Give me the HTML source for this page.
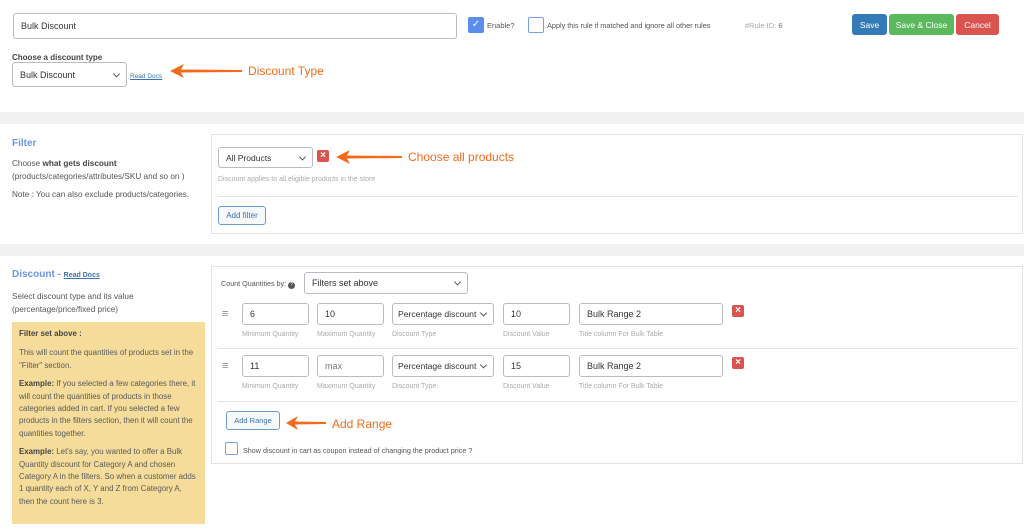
<!DOCTYPE html>
<html><head><meta charset="utf-8"><style>
*{box-sizing:border-box;margin:0;padding:0}
body{width:1024px;height:529px;background:#fff;font-family:"Liberation Sans",sans-serif;color:#555;position:relative;overflow:hidden;font-size:8px}
.a{position:absolute}
.inp{position:absolute;border:1px solid #b8bcc2;border-radius:3px;background:#fff;font-size:9px;color:#333;padding-left:7px;display:flex;align-items:center;white-space:nowrap;overflow:hidden}
.sel::after{content:"";position:absolute;right:7px;top:50%;width:4px;height:4px;border-right:1.2px solid #555;border-bottom:1.2px solid #555;transform:translateY(-70%) rotate(45deg)}
.lbl{position:absolute;font-size:7px;color:#aaa}
.x{position:absolute;width:12px;height:12px;background:#d9534f;border-radius:2px;color:#fff;font-size:10px;font-weight:bold;line-height:12px;text-align:center}
.btn{position:absolute;border-radius:3px;color:#fff;font-size:8.5px;display:flex;align-items:center;justify-content:center}
.wbtn{position:absolute;border:1px solid #6d9ccf;border-radius:3px;background:#f6f8fa;color:#3a72b0;font-size:7.5px;display:flex;align-items:center;justify-content:center}
.ann{position:absolute;color:#f26b1d;font-size:12px}
.cb{position:absolute;width:15px;height:15px;border:1.5px solid #7a9fe0;border-radius:2px;background:#fff}
</style></head><body>
<div class="inp" style="left:13px;top:13px;width:444px;height:26px;font-size:9px">Bulk Discount</div>
<div class="a" style="left:468px;top:17px;width:16px;height:16px;background:#5b8def;border-radius:2px;color:#fff;font-size:10px;text-align:center;line-height:16px">✓</div>
<div class="a" style="left:487px;top:21px;font-size:7.5px">Enable?</div>
<div class="cb" style="left:528px;top:17px;width:16px;height:16px"></div>
<div class="a" style="left:547px;top:21px;font-size:7.4px;letter-spacing:-0.05px">Apply this rule if matched and ignore all other rules</div>
<div class="a" style="left:745px;top:21px;font-size:7.5px;color:#aaa">#Rule ID: <b style="color:#999">6</b></div>
<div class="btn" style="left:852px;top:14px;width:35px;height:21px;background:#337ab7">Save</div>
<div class="btn" style="left:889px;top:14px;width:65px;height:21px;background:#5cb85c">Save &amp; Close</div>
<div class="btn" style="left:956px;top:14px;width:43px;height:21px;background:#d9534f">Cancel</div>
<div class="a" style="left:12px;top:53px;font-size:8px;font-weight:bold;color:#444">Choose a discount type</div>
<div class="inp sel" style="left:12px;top:62px;width:115px;height:25px">Bulk Discount</div>
<div class="a" style="left:130px;top:73px;font-size:6.5px;color:#3a72b0;text-decoration:underline">Read Docs</div>
<svg class="a" style="left:170px;top:64px" width="72" height="14"><polygon points="0,7 14,0 11,5.5 72,6 72,8 11,8.5 14,14" fill="#f26b1d"/></svg>
<div class="ann" style="left:248px;top:64px">Discount Type</div>
<div class="a" style="left:0;top:112px;width:1024px;height:12px;background:#f0f0f0"></div>
<div class="a" style="left:12px;top:138px;font-size:10px;font-weight:bold;color:#6d95e0">Filter</div>
<div class="a" style="left:12px;top:157px;font-size:8.2px;line-height:13px">Choose <b style="color:#444">what gets discount</b><br>(products/categories/attributes/SKU and so on )</div>
<div class="a" style="left:12px;top:190px;font-size:8.2px">Note : You can also exclude products/categories.</div>
<div class="a" style="left:211px;top:134px;width:812px;height:100px;border:1px solid #e2e2e2"></div>
<div class="inp sel" style="left:218px;top:147px;width:95px;height:21px;font-size:8.5px">All Products</div>
<div class="x" style="left:317px;top:150px">×</div>
<svg class="a" style="left:336px;top:150px" width="66" height="14"><polygon points="0,7 14,0 11,5.5 66,6 66,8 11,8.5 14,14" fill="#f26b1d"/></svg>
<div class="ann" style="left:408px;top:150px">Choose all products</div>
<div class="lbl" style="left:218px;top:176px">Discount applies to all eligible products in the store</div>
<div class="a" style="left:218px;top:196px;width:800px;height:1px;background:#e5e5e5"></div>
<div class="wbtn" style="left:218px;top:206px;width:48px;height:19px;font-size:8px">Add filter</div>
<div class="a" style="left:0;top:244px;width:1024px;height:12px;background:#f0f0f0"></div>
<div class="a" style="left:12px;top:269px;font-size:10px;font-weight:bold;color:#6d95e0">Discount - <span style="font-size:7px;color:#3a72b0;text-decoration:underline">Read Docs</span></div>
<div class="a" style="left:12px;top:290px;font-size:8.2px;line-height:13px">Select discount type and its value<br>(percentage/price/fixed price)</div>
<div class="a" style="left:12px;top:322px;width:193px;height:202px;background:#f5dc9a;padding:6px 7px;font-size:7.9px;line-height:12.4px;color:#5a5a5a">
<b style="color:#444">Filter set above :</b>
<p style="margin-top:7px">This will count the quantities of products set in the "Filter" section.</p>
<p style="margin-top:6px"><b style="color:#444">Example:</b> If you selected a few categories there, it will count the quantities of products in those categories added in cart. If you selected a few products in the filters section, then it will count the quantities together.</p>
<p style="margin-top:6px"><b style="color:#444">Example:</b> Let's say, you wanted to offer a Bulk Quantity discount for Category A and chosen Category A in the filters. So when a customer adds 1 quantity each of X, Y and Z from Category A, then the count here is 3.</p>
</div>
<div class="a" style="left:211px;top:266px;width:812px;height:198px;border:1px solid #e2e2e2"></div>
<div class="a" style="left:221px;top:279px;font-size:7.2px">Count Quantities by: <span style="display:inline-block;width:7px;height:7px;border-radius:50%;background:#555;color:#fff;font-size:5px;text-align:center;line-height:7px">?</span></div>
<div class="inp sel" style="left:304px;top:272px;width:164px;height:22px">Filters set above</div>

<div class="a" style="left:222px;top:310px;width:10px;font-size:11px;color:#888;line-height:8px">≡</div>
<div class="inp" style="left:242px;top:303px;width:67px;height:22px">6</div>
<div class="inp" style="left:317px;top:303px;width:67px;height:22px">10</div>
<div class="inp sel" style="left:392px;top:303px;width:102px;height:22px;font-size:8.6px;padding-left:5px">Percentage discount</div>
<div class="inp" style="left:503px;top:303px;width:67px;height:22px">10</div>
<div class="inp" style="left:579px;top:303px;width:144px;height:22px">Bulk Range 2</div>
<div class="x" style="left:732px;top:305px">×</div>
<div class="lbl" style="left:242px;top:331px">Minimum Quantity</div>
<div class="lbl" style="left:317px;top:331px">Maximum Quantity</div>
<div class="lbl" style="left:392px;top:331px">Discount Type</div>
<div class="lbl" style="left:503px;top:331px">Discount Value</div>
<div class="lbl" style="left:579px;top:331px">Title column For Bulk Table</div>
<div class="a" style="left:218px;top:348px;width:800px;height:1px;background:#e5e5e5"></div>

<div class="a" style="left:222px;top:362px;width:10px;font-size:11px;color:#888;line-height:8px">≡</div>
<div class="inp" style="left:242px;top:355px;width:67px;height:22px">11</div>
<div class="inp" style="left:317px;top:355px;width:67px;height:22px;color:#777">max</div>
<div class="inp sel" style="left:392px;top:355px;width:102px;height:22px;font-size:8.6px;padding-left:5px">Percentage discount</div>
<div class="inp" style="left:503px;top:355px;width:67px;height:22px">15</div>
<div class="inp" style="left:579px;top:355px;width:144px;height:22px">Bulk Range 2</div>
<div class="x" style="left:732px;top:357px">×</div>
<div class="lbl" style="left:242px;top:383px">Minimum Quantity</div>
<div class="lbl" style="left:317px;top:383px">Maximum Quantity</div>
<div class="lbl" style="left:392px;top:383px">Discount Type</div>
<div class="lbl" style="left:503px;top:383px">Discount Value</div>
<div class="lbl" style="left:579px;top:383px">Title column For Bulk Table</div>
<div class="a" style="left:218px;top:401px;width:800px;height:1px;background:#e5e5e5"></div>

<div class="wbtn" style="left:226px;top:411px;width:54px;height:19px">Add Range</div>
<svg class="a" style="left:286px;top:416px" width="40" height="14"><polygon points="0,7 12,0 9,5.5 40,6 40,8 9,8.5 12,14" fill="#f26b1d"/></svg>
<div class="ann" style="left:332px;top:417px">Add Range</div>
<div class="cb" style="left:225px;top:442px;width:13px;height:13px"></div>
<div class="a" style="left:243px;top:446px;font-size:7.2px">Show discount in cart as coupon instead of changing the product price ?</div>
</body></html>
